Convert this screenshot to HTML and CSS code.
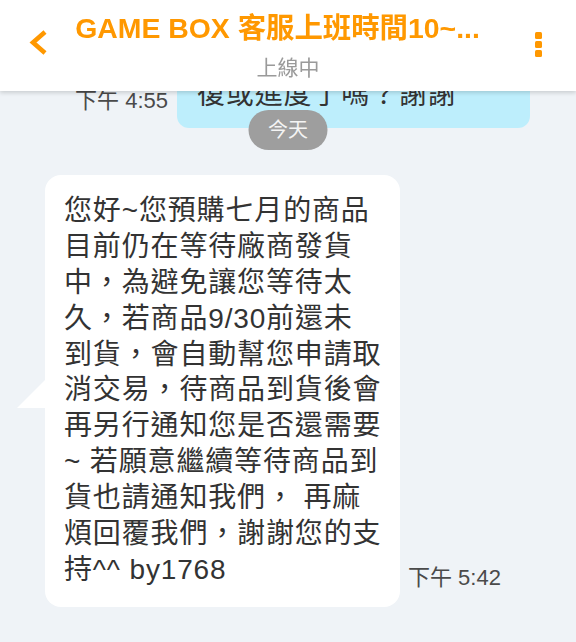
FILE: index.html
```html
<!DOCTYPE html>
<html lang="zh-Hant">
<head>
  <meta charset="UTF-8">
  <meta name="viewport" content="width=device-width, initial-scale=1.0">
  <title>GAME BOX 客服</title>
  <link rel="stylesheet" href="styles.css">
</head>
<body>
  <header class="topbar">
    <div class="back">
      <svg width="24" height="28" viewBox="0 0 24 28">
        <polyline points="17,3 5,13.5 17,24" fill="none" stroke="#ff9800" stroke-width="4.6" stroke-linejoin="miter"/>
      </svg>
    </div>
    <div class="heading">
      <div class="title">GAME BOX 客服上班時間10~...</div>
      <div class="status">上線中</div>
    </div>
    <div class="menu">
      <span></span><span></span><span></span>
    </div>
  </header>

  <div class="chat">
    <div class="row mine">
      <div class="time">下午 4:55</div>
      <div class="bubble blue">復或進度了嗎？謝謝</div>
    </div>

    <div class="day">今天</div>

    <div class="row theirs">
      <div class="bubble white">
        您好~您預購七月的商品<br>
        目前仍在等待廠商發貨<br>
        中，為避免讓您等待太<br>
        久，若商品9/30前還未<br>
        到貨，會自動幫您申請取<br>
        消交易，待商品到貨後會<br>
        再另行通知您是否還需要<br>
        ~ 若願意繼續等待商品到<br>
        貨也請通知我們， 再麻<br>
        煩回覆我們，謝謝您的支<br>
        持^^ by1768
      </div>
      <div class="time">下午 5:42</div>
    </div>
  </div>
</body>
</html>
```

FILE: styles.css
```css
body {
  margin: 0;
  padding: 0;
  background-color: #eff3f7;
  font-family: "Liberation Sans", "Noto Sans CJK TC", sans-serif;
  color: #333;
}

.topbar {
  position: fixed;
  top: 0;
  left: 0;
  right: 0;
  height: 91px;
  background-color: white;
  box-shadow: 0 2px 4px rgba(0, 0, 0, 0.15);
  display: flex;
  align-items: flex-start;
  z-index: 10;
}

.back {
  width: 60px;
  padding: 29px 0 0 28px;
  box-sizing: border-box;
}

.back svg {
  display: block;
}

.heading {
  flex: 1;
  text-align: center;
  padding-top: 11px;
}

.title {
  color: #ff9800;
  font-weight: bold;
  font-size: 28.4px;
  line-height: 34px;
  margin-right: 21px;
  white-space: nowrap;
}

.status {
  color: #9a9a9a;
  font-size: 21px;
  line-height: 26px;
  margin-top: 10px;
}

.menu {
  width: 60px;
  padding: 32px 34px 0 0;
  box-sizing: border-box;
  display: flex;
  flex-direction: column;
  align-items: flex-end;
  gap: 2px;
}

.menu span {
  width: 7px;
  height: 7px;
  border-radius: 1.5px;
  background-color: #ff9800;
}

.chat {
  position: relative;
  padding-top: 65px;
}

.row {
  display: flex;
  align-items: flex-end;
  gap: 9px;
}

.row.mine {
  justify-content: flex-end;
  padding-right: 46px;
}

.row.mine .time {
  padding-bottom: 14px;
}

.row.theirs {
  padding-left: 45px;
  margin-top: 47px;
  gap: 8px;
}

.time {
  font-size: 22px;
  line-height: 26px;
  color: #4a4a4a;
  padding-bottom: 16px;
  white-space: nowrap;
}

.bubble {
  font-size: 28px;
  line-height: 35.9px;
  letter-spacing: 0.85px;
}

.bubble.blue {
  width: 353px;
  box-sizing: border-box;
  background-color: #bdeefc;
  border-radius: 12px;
  padding: 12px 18px 15px 20px;
}

.bubble.white {
  position: relative;
  width: 355px;
  box-sizing: border-box;
  background-color: white;
  border-radius: 16px;
  padding: 18px 12px 19px 19px;
  white-space: nowrap;
}

.bubble.white::before {
  content: "";
  position: absolute;
  left: -28px;
  top: 205px;
  width: 0;
  height: 0;
  border-left: 28px solid transparent;
  border-bottom: 28px solid white;
}

.day {
  position: absolute;
  top: 110px;
  left: 50%;
  transform: translateX(-50%);
  width: 79px;
  height: 40px;
  line-height: 40px;
  border-radius: 20px;
  background-color: #9e9e9e;
  color: #f4f4f4;
  font-size: 20px;
  text-align: center;
}
```
